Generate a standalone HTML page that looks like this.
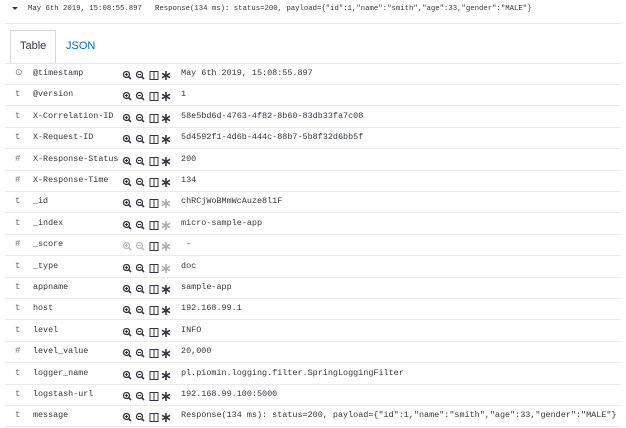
<!DOCTYPE html>
<html><head><style>
body{margin:0;width:626px;height:424px;background:#fff;font-family:"Liberation Mono",monospace;color:#343741;overflow:hidden;position:relative}
.top{position:absolute;top:5px;left:12px;font-size:7.3px;white-space:nowrap;color:#343741}
.top .car{display:inline-block;width:0;height:0;border-left:3px solid transparent;border-right:3px solid transparent;border-top:3px solid #343741;margin-right:10px;vertical-align:middle}
.hr{position:absolute;left:5px;right:5px;height:1px;background:#e4e6eb}
.tab{position:absolute;font-family:"Liberation Sans",sans-serif;font-size:11px}
.tabbox{position:absolute;left:10px;top:30px;width:44px;height:33px;border:1px solid #d3dae6;border-bottom:none;background:#fff}
.row{position:absolute;left:5px;right:5px;height:21px;border-bottom:1px solid #e8eaed}
.ty{position:absolute;left:10px;top:5px;font-size:9px;color:#69707d}
.fn{position:absolute;left:28px;top:5px;font-size:8.4px}
.ic{position:absolute;left:117px;top:5px}
.val{position:absolute;left:176px;top:5px;font-size:8.45px;white-space:nowrap}
</style></head><body>
<div class="top"><span class="car"></span>May 6th 2019, 15:08:55.897&nbsp;&nbsp;&nbsp;Response(134 ms): status=200, payload={"id":1,"name":"smith","age":33,"gender":"MALE"}</div>
<div class="hr" style="top:23px"></div>
<div class="tabbox"></div>
<div class="hr" style="top:63px;left:5px"></div>
<div class="tab" style="left:20px;top:40px;color:#343741">Table</div>
<div class="tab" style="left:66px;top:40px;color:#006bb4">JSON</div>
<div id="rows"></div>
<script>
var R=[["⊙","@timestamp","May 6th 2019, 15:08:55.897"],["t","@version","1"],["t","X-Correlation-ID","58e5bd6d-4763-4f82-8b60-83db33fa7c08"],["t","X-Request-ID","5d4592f1-4d6b-444c-88b7-5b8f32d6bb5f"],["#","X-Response-Status","200"],["#","X-Response-Time","134"],["t","_id","chRCjWoBMmWcAuze8l1F",1],["t","_index","micro-sample-app",1],["#","_score","&nbsp;-",2],["t","_type","doc",1],["t","appname","sample-app"],["t","host","192.168.99.1"],["t","level","INFO"],["#","level_value","20,000"],["t","logger_name","pl.piomin.logging.filter.SpringLoggingFilter"],["t","logstash-url","192.168.99.100:5000"],["t","message",'Response(134 ms): status=200, payload={"id":1,"name":"smith","age":33,"gender":"MALE"}']];
function icons(m){var c=m==2?"#b8bcc4":"#343741",a=m>=1?"#a8adb5":"#343741";
function mag(x,p){return '<circle cx="'+(x+3.5)+'" cy="3.5" r="3" fill="none" stroke="'+c+'" stroke-width="1.3"/><line x1="'+(x+5.6)+'" y1="5.6" x2="'+(x+8)+'" y2="8" stroke="'+c+'" stroke-width="1.6"/><line x1="'+(x+2)+'" y1="3.5" x2="'+(x+5)+'" y2="3.5" stroke="'+c+'" stroke-width="1"/>'+(p?'<line x1="'+(x+3.5)+'" y1="2" x2="'+(x+3.5)+'" y2="5" stroke="'+c+'" stroke-width="1"/>':'');}
return '<svg width="56" height="10" viewBox="0 0 56 10">'+mag(1,1)+mag(14,0)+'<rect x="28" y="0.5" width="8" height="8" fill="none" stroke="#343741" stroke-width="1"/><line x1="32" y1="0.5" x2="32" y2="8.5" stroke="#343741"/><g stroke="'+a+'" stroke-width="1.6"><line x1="44" y1="0" x2="44" y2="9"/><line x1="40" y1="2.3" x2="48" y2="6.7"/><line x1="40" y1="6.7" x2="48" y2="2.3"/></g></svg>';}
function esc(s){return s.indexOf("&nbsp;")>=0?s:s.replace(/</g,"&lt;");}
var h="";R.forEach(function(r,i){var t=63+21.4*i;h+='<div class="row" style="top:'+t+'px"><span class="ty">'+r[0]+'</span><span class="fn">'+r[1]+'</span><span class="ic">'+icons(r[3]||0)+'</span><span class="val">'+esc(r[2])+'</span></div>';});
document.getElementById("rows").innerHTML=h;
</script>
</body></html>
